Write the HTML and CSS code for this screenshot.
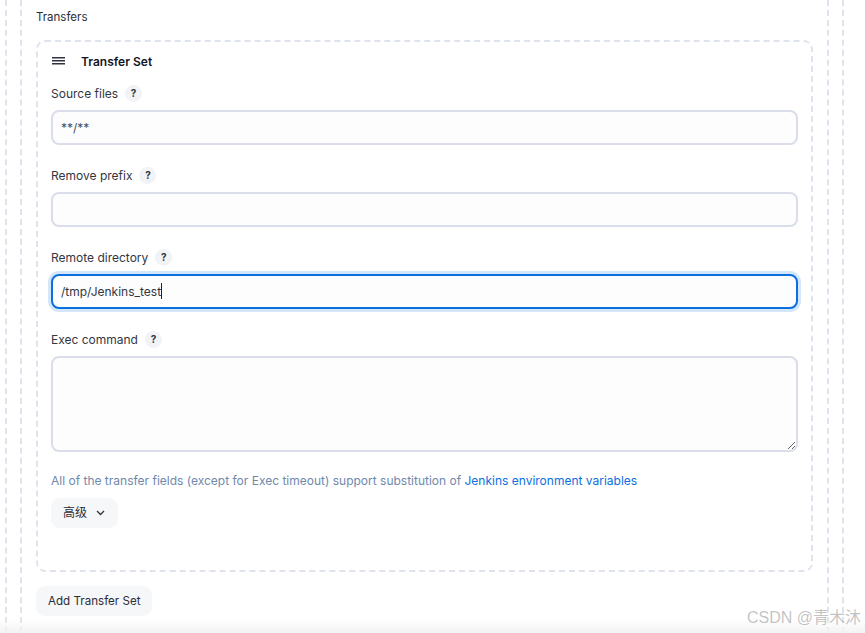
FILE: index.html
```html
<!DOCTYPE html>
<html lang="en">
<head>
  <meta charset="UTF-8" />
  <title>Transfers</title>
  <link rel="stylesheet" href="styles.css">
</head>
<body>
  <div class="repeat outer">
    <div class="repeat middle">
      <div class="transfers-label">Transfers</div>

      <div class="transfer-set">
        <div class="set-title">
          <svg class="drag" width="13" height="8" viewBox="0 0 13 8"><path d="M0 .75h13M0 3.75h13M0 6.75h13" stroke="#2f3340" stroke-width="1.5" fill="none"/></svg>
          <b>Transfer Set</b>
        </div>

        <div class="field">
          <div class="label">Source files <span class="help">?</span></div>
          <input class="text" type="text" value="**/**">
        </div>

        <div class="field">
          <div class="label">Remove prefix <span class="help">?</span></div>
          <input class="text" type="text" value="">
        </div>

        <div class="field">
          <div class="label">Remote directory <span class="help">?</span></div>
          <div class="text focused">/tmp/Jenkins_test<span class="caret"></span></div>
        </div>

        <div class="field">
          <div class="label">Exec command <span class="help">?</span></div>
          <textarea class="text area"></textarea>
        </div>

        <p class="hint">All of the transfer fields (except for Exec timeout) support substitution of <a href="#">Jenkins environment variables</a></p>

        <button class="btn advanced"><span class="btn-text">高级</span>
          <svg width="9" height="6" viewBox="0 0 9 6"><path d="M1 1l3.5 3.5L8 1" stroke="#2f3340" stroke-width="1.3" fill="none"/></svg>
        </button>
      </div>

      <button class="btn add">Add Transfer Set</button>
    </div>
  </div>

  <div class="fade"></div>
  <div class="watermark">CSDN @青木沐</div>
</body>
</html>
```

FILE: styles.css
```css
* {
  margin: 0;
  padding: 0;
  box-sizing: border-box;
}

html, body {
  height: 100%;
  overflow: hidden;
}

body {
  background: #fff;
  color: #2b2e38;
  font-family: Inter, "Noto Sans CJK SC", sans-serif;
  font-size: 12px;
}

.repeat {
  border-left: 2px dashed #dfe3ed;
  border-right: 2px dashed #dfe3ed;
}

.outer {
  width: 839px;
  height: 100%;
  margin-left: 5px;
  padding: 0 13px;
}

.middle {
  height: 100%;
  padding: 8px 14px 0;
}

.transfers-label {
  height: 18px;
  line-height: 18px;
  margin-bottom: 14px;
  font-size: 11.5px;
}

.transfer-set {
  height: 532px;
  padding: 10px 13px 0;
  border: 2px dashed #dfe3ed;
  border-radius: 9px;
}

.set-title {
  display: flex;
  align-items: center;
  gap: 16px;
  height: 18px;
  padding-left: 1px;
  color: #14161f;
}

.set-title b {
  font-weight: 600;
}

.field {
  margin-top: 14px;
}

.field + .field {
  margin-top: 21px;
}

.label {
  display: flex;
  align-items: center;
  gap: 7px;
  height: 18px;
  margin-bottom: 8px;
  color: #33363f;
}

.help {
  display: inline-flex;
  align-items: center;
  justify-content: center;
  width: 17px;
  height: 17px;
  border-radius: 50%;
  background: #f1f3f7;
  font-size: 10px;
  font-weight: 700;
}

.text {
  display: block;
  width: 100%;
  height: 35px;
  padding: 0 8px;
  border: 2px solid #d9deea;
  border-radius: 8px;
  background: #fdfdfe;
  color: #4a4d56;
  font: inherit;
  line-height: 31px;
  outline: none;
}

.focused {
  border-color: #0b6fe0;
  box-shadow: 0 0 0 3px #d3e6fa;
  color: #33363f;
}

.caret {
  display: inline-block;
  width: 1px;
  height: 16px;
  background: #222;
  vertical-align: -3px;
}

.area {
  height: 96px;
  resize: vertical;
}

.hint {
  margin-top: 20px;
  line-height: 18px;
  color: #6f88ab;
}

.hint a {
  color: #0b6fe0;
  text-decoration: none;
}

.btn {
  display: flex;
  align-items: center;
  height: 30px;
  border: none;
  border-radius: 9px;
  background: #f6f7f9;
  color: #2b2e38;
  font: inherit;
}

.btn-text {
  margin-bottom: 3px;
}

.advanced {
  gap: 9px;
  margin-top: 8px;
  padding: 0 13px 0 12px;
}

.add {
  margin-top: 14px;
  padding: 0 12px;
  font-size: 11.6px;
  line-height: 28px;
}

.fade {
  position: absolute;
  left: 0;
  right: 0;
  bottom: 0;
  height: 14px;
  background: linear-gradient(to bottom, rgba(243, 243, 243, 0), #f3f3f3);
}

.watermark {
  position: absolute;
  right: 4px;
  bottom: 6px;
  color: rgba(120, 120, 120, 0.45);
  font-family: "Liberation Sans", "Noto Sans CJK SC", sans-serif;
  font-size: 16px;
  line-height: 18px;
}
```
